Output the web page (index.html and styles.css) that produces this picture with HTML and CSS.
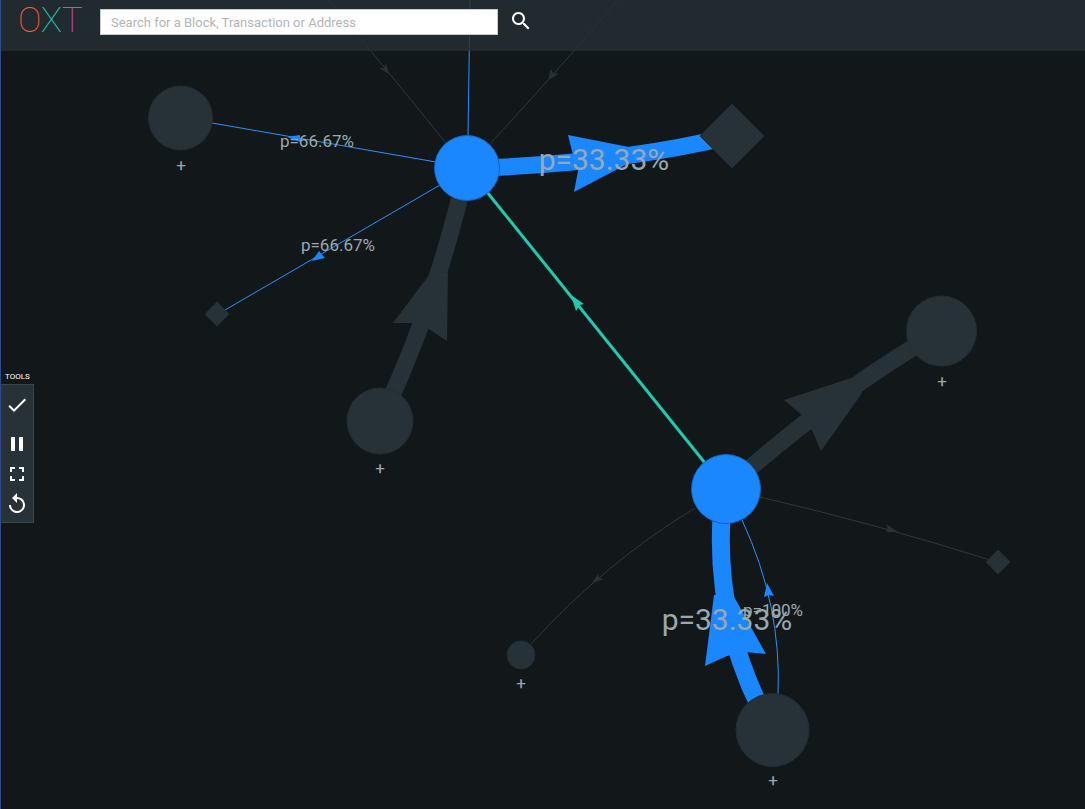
FILE: index.html
```html
<!DOCTYPE html>
<html lang="en">
<head>
  <meta charset="UTF-8" />
  <meta name="viewport" content="width=device-width, initial-scale=1" />
  <title>OXT</title>
  <link rel="stylesheet" href="styles.css">
</head>
<body>
  <header class="topbar">
    <a href="/" class="logo"><span class="logo-o">O</span><span class="logo-x">X</span><span class="logo-t">T</span></a>
    <form class="search" role="search">
      <input type="text" id="search" class="search-input" name="q" aria-label="Search" placeholder="Search for a Block, Transaction or Address" />
      <button type="submit" class="search-button" aria-label="Search">
        <svg class="icon" viewBox="0 0 24 24"><path d="M15.5 14h-.79l-.28-.27C15.41 12.59 16 11.11 16 9.500 16 5.910 13.090 3 9.500 3S3 5.910 3 9.500 5.910 16 9.500 16c1.610 0 3.090-.59 4.230-1.570l.27.28v.79l5 4.990L20.490 19l-4.990-5zm-6 0C7.010 14 5 11.990 5 9.500S7.010 5 9.500 5 14 7.010 14 9.500 11.990 14 9.500 14z"/></svg>
      </button>
    </form>
  </header>

  <aside class="tools">
    <h2 class="tools-title">TOOLS</h2>
    <div class="tools-panel">
      <button type="button" class="tool tool-select" aria-label="Select">
        <svg class="icon" viewBox="0 0 24 24"><path d="M9 16.170L4.830 12l-1.420 1.410L9 19 21 7l-1.410-1.410z"/></svg>
      </button>
      <button type="button" class="tool" aria-label="Pause">
        <svg class="icon" viewBox="0 0 24 24"><path d="M6 19h4V5H6v14zm8-14v14h4V5h-4z"/></svg>
      </button>
      <button type="button" class="tool" aria-label="Fullscreen">
        <svg class="icon" viewBox="0 0 24 24"><path d="M7 14H5v5h5v-2H7v-3zm-2-4h2V7h3V5H5v5zm12 7h-3v2h5v-5h-2v3zM14 5v2h3v3h2V5h-5z"/></svg>
      </button>
      <button type="button" class="tool" aria-label="Reset">
        <svg class="icon" viewBox="0 0 24 24"><path d="M12 5V1L7 6l5 5V7c3.310 0 6 2.690 6 6s-2.690 6-6 6-6-2.690-6-6H4c0 4.420 3.580 8 8 8s8-3.580 8-8-3.580-8-8-8z"/></svg>
      </button>
    </div>
  </aside>

  <main class="canvas">
    <svg class="graph" role="img" aria-label="Transaction graph">
      <!-- inactive edges -->
      <g class="edge">
        <path d="M328 0Q374 54 446 143"/>
        <path d="M618 0Q568 59 490 144"/>
        <path d="M760 497Q880 525 990 560"/>
        <path d="M695 508Q606 562 531 644"/>
      </g>
      <g class="edge edge-thick">
        <path d="M380 421Q434 310 467 168"/>
        <path d="M726 489Q836 391 941 331"/>
      </g>
      <g class="arrow">
        <path d="M389 74L379 68L384 68L386 63Z"/>
        <path d="M548 80L551 69L553 73L559 74Z"/>
        <path d="M898 532L886 524L888 529L886 532Z"/>
        <path d="M592 583L598 574L599 578L604 579Z"/>
        <path d="M432 271L393 323L413 323L429 329L447 341L448 273Z"/>
        <path d="M851 378L784 400L802 415L812 430L821 451L862 393Z"/>
      </g>

      <!-- active edges -->
      <g class="edge edge-active">
        <path d="M470 0L468 136"/>
        <path d="M212 123L436 162"/>
        <path d="M225 310L440 185"/>
        <path d="M742 520Q782 606 778 695"/>
      </g>
      <path class="edge edge-active edge-wide" d="M480 168Q620 163 732 136"/>
      <path class="edge edge-active edge-wider" d="M724 489Q708 618 772 730"/>
      <g class="arrow arrow-active">
        <path d="M287 137L300 135L300 142Z"/>
        <path d="M312 261L319 251L325 258Z"/>
        <path d="M767 583L764 597L769 595L774 596Z"/>
        <path d="M568 135L634 148L650 153L629 163L574 192L578 171L573 155Z"/>
        <path d="M714 595L705 666L727 656L745 652L766 654L732 593Z"/>
      </g>

      <!-- selected link -->
      <path class="edge edge-link" d="M487 192L705 463"/>
      <path class="arrow-link" d="M571 295L584 304L580 305L576 311Z"/>

      <g class="node">
        <circle cx="180.500" cy="118" r="32"/>
        <circle cx="380" cy="421" r="33"/>
        <circle cx="941.500" cy="331" r="35"/>
        <circle cx="521" cy="655" r="14"/>
        <circle cx="772.500" cy="730" r="36.500"/>
        <path d="M217 302L229 314L217 326L205 314Z"/>
        <path d="M732 104L764 136L732 168L700 136Z"/>
        <path d="M998 550L1010 562L998 574L986 562Z"/>
      </g>
      <g class="node node-active">
        <circle cx="467" cy="168" r="32.500"/>
        <circle cx="726" cy="489" r="34.500"/>
      </g>

      <g class="label">
        <text x="181" y="171">+</text>
        <text x="380" y="474">+</text>
        <text x="942" y="387">+</text>
        <text x="521" y="689">+</text>
        <text x="773" y="786">+</text>
        <text x="317" y="147">p=66.67%</text>
        <text x="338" y="251">p=66.67%</text>
        <text x="773" y="616">p=100%</text>
      </g>
      <g class="label label-large">
        <text x="604" y="170">p=33.33%</text>
        <text x="727" y="630">p=33.33%</text>
      </g>
    </svg>
  </main>
</body>
</html>
```

FILE: styles.css
```css
* {
  box-sizing: border-box;
}
body {
  margin: 0;
  min-height: 100vh;
  display: flex;
  background: #12181a;
  border-left: 1px solid #32498f;
  color: #fff;
  font-family: Roboto, "Liberation Sans", sans-serif;
}
button {
  padding: 0;
  border: none;
  background: none;
  color: inherit;
  cursor: pointer;
}
.icon {
  display: block;
  width: 24px;
  height: 24px;
  fill: currentColor;
}

/* top bar */
.topbar {
  position: absolute;
  top: 0;
  left: 1px;
  right: 0;
  z-index: 2;
  display: flex;
  gap: 16px;
  height: 51px;
  padding: 0 17px;
  background: rgba(36, 48, 52, 0.8);
}
.logo {
  width: 66px;
  font-size: 35px;
  font-weight: 100;
  line-height: 42px;
  text-decoration: none;
}
.logo-o {
  color: #ff5a3c;
}
.logo-x {
  color: #1fd0ae;
}
.logo-t {
  color: #c04ae8;
}
.search {
  display: flex;
  flex: 1;
  align-items: flex-start;
  gap: 11px;
  padding-top: 9px;
}
.search-input {
  width: 100%;
  max-width: 398px;
  height: 26px;
  padding: 0 10px;
  border: 1px solid #c8cccd;
  background: #fff;
  color: #333;
  font-family: inherit;
  font-size: 13px;
}
.search-input::placeholder {
  color: #b4b4b4;
}

/* tools */
.tools {
  position: absolute;
  top: 369px;
  left: 1px;
  z-index: 1;
}
.tools-title {
  margin: 0;
  padding-left: 4px;
  font-size: 8px;
  font-weight: 400;
  line-height: 15px;
}
.tools-panel {
  display: flex;
  flex-direction: column;
  width: 33px;
  padding: 5px 0 3px;
  border: 1px solid #3c474c;
  border-left: none;
  background: #263238;
}
.tool {
  height: 30px;
  padding: 3px 4px;
}
.tool-select {
  margin-bottom: 9px;
}

/* graph */
.canvas {
  display: flex;
  flex: 1;
}
.graph {
  flex: 1;
  margin-left: -1px;
}
.edge {
  fill: none;
  stroke: #2f373b;
  stroke-width: 1px;
}
.edge-thick {
  stroke: #263238;
  stroke-width: 17px;
}
.edge-active {
  stroke: #2b90ff;
}
.edge-wide {
  stroke: #1b87ff;
  stroke-width: 17px;
}
.edge-wider {
  stroke: #1b87ff;
  stroke-width: 18px;
}
.edge-link {
  stroke: #1fcab0;
  stroke-width: 3px;
}
.arrow {
  fill: #263238;
}
.arrow-active {
  fill: #1b87ff;
}
.arrow-link {
  fill: #1fcab0;
}
.node {
  fill: #263238;
  stroke: #222d33;
  stroke-width: 1px;
}
.node-active {
  fill: #1b87ff;
  stroke: #1463bd;
}
.label {
  fill: #9ba8ad;
  font-size: 17px;
  text-anchor: middle;
}
.label-large {
  font-size: 30px;
}
```
